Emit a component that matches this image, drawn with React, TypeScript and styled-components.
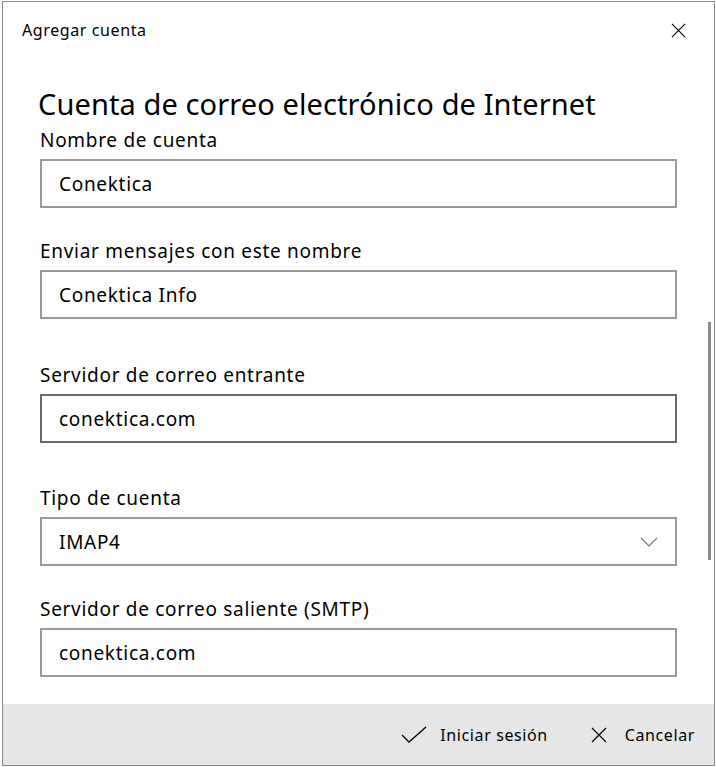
import React from 'react'
import styled, { createGlobalStyle } from 'styled-components'

const GlobalStyle = createGlobalStyle`
  html, body {
    margin: 0;
    padding: 0;
    background: #ffffff;
  }
  body {
    font-family: "Noto Sans", "Open Sans", Arial, sans-serif;
    color: #000;
  }
`

const Page = styled.div`
  width: 716px;
  height: 767px;
  padding: 1px 1px 1px 2px;
  box-sizing: border-box;
`

const Window = styled.div`
  height: 100%;
  border: 1px solid #8a8a8a;
  box-sizing: border-box;
  display: flex;
  flex-direction: column;
  background: #fff;
`

const TitleBar = styled.div`
  height: 56px;
  display: flex;
  align-items: center;
  justify-content: space-between;
  padding: 0 28px 0 19px;
  flex-shrink: 0;
`

const TitleText = styled.span`
  font-size: 16px;
  letter-spacing: 0.6px;
`

const Body = styled.div`
  flex: 1;
  display: flex;
  min-height: 0;
`

const Form = styled.div`
  flex: 1;
  padding: 28px 0 0 37px;
`

const Heading = styled.h1`
  margin: 0 0 0 -2px;
  font-size: 29px;
  font-weight: 400;
  line-height: 36px;
  letter-spacing: 0.1px;
`

const Field = styled.div<{ $gap: number }>`
  margin-top: ${p => p.$gap}px;
  width: 637px;
`

const Label = styled.div`
  font-size: 19px;
  letter-spacing: 0.7px;
  line-height: 24px;
  margin-bottom: 7px;
`

const Input = styled.div<{ $focused?: boolean }>`
  height: 49px;
  box-sizing: border-box;
  border: 2px solid ${p => (p.$focused ? '#6b6b6b' : '#9a9a9a')};
  display: flex;
  align-items: center;
  justify-content: space-between;
  padding: 0 17px 0 17px;
  font-size: 19px;
  letter-spacing: 0.7px;
`

const Scroll = styled.div`
  width: 30px;
  padding-top: 264px;
`

const Thumb = styled.div`
  width: 3px;
  height: 238px;
  background: #888;
  margin-left: 24px;
`

const Footer = styled.div`
  height: 61px;
  flex-shrink: 0;
  background: #e6e6e6;
  display: flex;
  align-items: center;
  justify-content: flex-end;
  gap: 43px;
  padding-right: 19px;
`

const Action = styled.button<{ $gap: number }>`
  border: 0;
  background: transparent;
  padding: 0;
  display: flex;
  align-items: center;
  gap: ${p => p.$gap}px;
  font-family: inherit;
  font-size: 16px;
  letter-spacing: 0.6px;
  color: #000;
`

const Cross = ({ size }: { size: number }) => (
  <svg width={size} height={size} viewBox="0 0 16 16" fill="none" stroke="#000" strokeWidth="1.2">
    <path d="M1 1 L15 15 M15 1 L1 15" />
  </svg>
)

const Check = () => (
  <svg width="26" height="18" viewBox="0 0 26 18" fill="none" stroke="#000" strokeWidth="1.3">
    <path d="M1 9 L8 16 L25 1" />
  </svg>
)

const Chevron = () => (
  <svg width="18" height="10" viewBox="0 0 18 10" fill="none" stroke="#777" strokeWidth="1.2">
    <path d="M1 1 L9 9 L17 1" />
  </svg>
)

export default function App() {
  return (
    <>
      <GlobalStyle />
      <Page>
        <Window>
          <TitleBar>
            <TitleText>Agregar cuenta</TitleText>
            <Cross size={15} />
          </TitleBar>
          <Body>
            <Form>
              <Heading>Cuenta de correo electrónico de Internet</Heading>
              <Field $gap={6}>
                <Label>Nombre de cuenta</Label>
                <Input>Conektica</Input>
              </Field>
              <Field $gap={31}>
                <Label>Enviar mensajes con este nombre</Label>
                <Input>Conektica Info</Input>
              </Field>
              <Field $gap={44}>
                <Label>Servidor de correo entrante</Label>
                <Input $focused>conektica.com</Input>
              </Field>
              <Field $gap={43}>
                <Label>Tipo de cuenta</Label>
                <Input>
                  IMAP4
                  <Chevron />
                </Input>
              </Field>
              <Field $gap={31}>
                <Label>Servidor de correo saliente (SMTP)</Label>
                <Input>conektica.com</Input>
              </Field>
            </Form>
            <Scroll>
              <Thumb />
            </Scroll>
          </Body>
          <Footer>
            <Action $gap={13}>
              <Check />
              Iniciar sesión
            </Action>
            <Action $gap={18}>
              <Cross size={16} />
              Cancelar
            </Action>
          </Footer>
        </Window>
      </Page>
    </>
  )
}
